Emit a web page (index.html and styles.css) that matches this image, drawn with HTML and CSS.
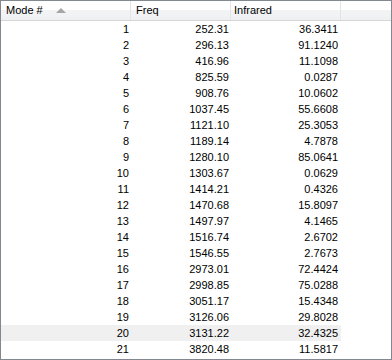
FILE: index.html
```html
<!DOCTYPE html>
<html>
<head>
<meta charset="utf-8">
<link rel="stylesheet" href="styles.css">
</head>
<body>
<div class="grid">
  <div class="head">
    <div class="hc c1">Mode #<span class="sort"></span></div>
    <div class="hc c2">Freq</div>
    <div class="hc c3">Infrared</div>
    <div class="hc fill"></div>
  </div>
  <div class="body">
    <div class="row"><div class="c c1">1</div><div class="c c2">252.31</div><div class="c c3">36.3411</div></div>
    <div class="row"><div class="c c1">2</div><div class="c c2">296.13</div><div class="c c3">91.1240</div></div>
    <div class="row"><div class="c c1">3</div><div class="c c2">416.96</div><div class="c c3">11.1098</div></div>
    <div class="row"><div class="c c1">4</div><div class="c c2">825.59</div><div class="c c3">0.0287</div></div>
    <div class="row"><div class="c c1">5</div><div class="c c2">908.76</div><div class="c c3">10.0602</div></div>
    <div class="row"><div class="c c1">6</div><div class="c c2">1037.45</div><div class="c c3">55.6608</div></div>
    <div class="row"><div class="c c1">7</div><div class="c c2">1121.10</div><div class="c c3">25.3053</div></div>
    <div class="row"><div class="c c1">8</div><div class="c c2">1189.14</div><div class="c c3">4.7878</div></div>
    <div class="row"><div class="c c1">9</div><div class="c c2">1280.10</div><div class="c c3">85.0641</div></div>
    <div class="row"><div class="c c1">10</div><div class="c c2">1303.67</div><div class="c c3">0.0629</div></div>
    <div class="row"><div class="c c1">11</div><div class="c c2">1414.21</div><div class="c c3">0.4326</div></div>
    <div class="row"><div class="c c1">12</div><div class="c c2">1470.68</div><div class="c c3">15.8097</div></div>
    <div class="row"><div class="c c1">13</div><div class="c c2">1497.97</div><div class="c c3">4.1465</div></div>
    <div class="row"><div class="c c1">14</div><div class="c c2">1516.74</div><div class="c c3">2.6702</div></div>
    <div class="row"><div class="c c1">15</div><div class="c c2">1546.55</div><div class="c c3">2.7673</div></div>
    <div class="row"><div class="c c1">16</div><div class="c c2">2973.01</div><div class="c c3">72.4424</div></div>
    <div class="row"><div class="c c1">17</div><div class="c c2">2998.85</div><div class="c c3">75.0288</div></div>
    <div class="row"><div class="c c1">18</div><div class="c c2">3051.17</div><div class="c c3">15.4348</div></div>
    <div class="row"><div class="c c1">19</div><div class="c c2">3126.06</div><div class="c c3">29.8028</div></div>
    <div class="row hover"><div class="c c1">20</div><div class="c c2">3131.22</div><div class="c c3">32.4325</div></div>
    <div class="row"><div class="c c1">21</div><div class="c c2">3820.48</div><div class="c c3">11.5817</div></div>
  </div>
</div>
</body>
</html>
```
FILE: styles.css
```css
html, body {
  margin: 0;
  padding: 0;
  background: #ffffff;
}
.grid {
  box-sizing: border-box;
  width: 392px;
  height: 360px;
  border: 1px solid #828790;
  font-family: "Liberation Sans", Arial, sans-serif;
  font-size: 11px;
  color: #000000;
  overflow: hidden;
}
.head {
  display: flex;
  height: 19px;
  border-bottom: 1px solid #d5d5d5;
  background: linear-gradient(#ffffff 0%, #ffffff 45%, #f3f4f6 46%, #eff0f2 100%);
}
.hc {
  box-sizing: border-box;
  height: 19px;
  line-height: 18px;
  border-right: 1px solid #e3e4e6;
  position: relative;
  white-space: nowrap;
}
.c1 { width: 130px; }
.c2 { width: 100px; }
.c3 { width: 110px; }
.head .c1 { padding-left: 5px; }
.head .c2 { padding-left: 5px; }
.head .c3 { padding-left: 3px; }
.head .fill { flex: 1; border-right: none; }
.sort {
  position: absolute;
  left: 55px;
  top: 7px;
  width: 0;
  height: 0;
  border-left: 5px solid transparent;
  border-right: 5px solid transparent;
  border-bottom: 5px solid #a6a6a6;
}
.body {
  display: flex;
  flex-direction: column;
}
.row {
  display: flex;
  height: 16px;
  line-height: 16px;
}
.row.hover .c {
  background: #f0f0f0;
}
.c {
  box-sizing: border-box;
  text-align: right;
  padding-right: 2px;
  white-space: nowrap;
}
.c.c3 { padding-right: 3px; }
```
